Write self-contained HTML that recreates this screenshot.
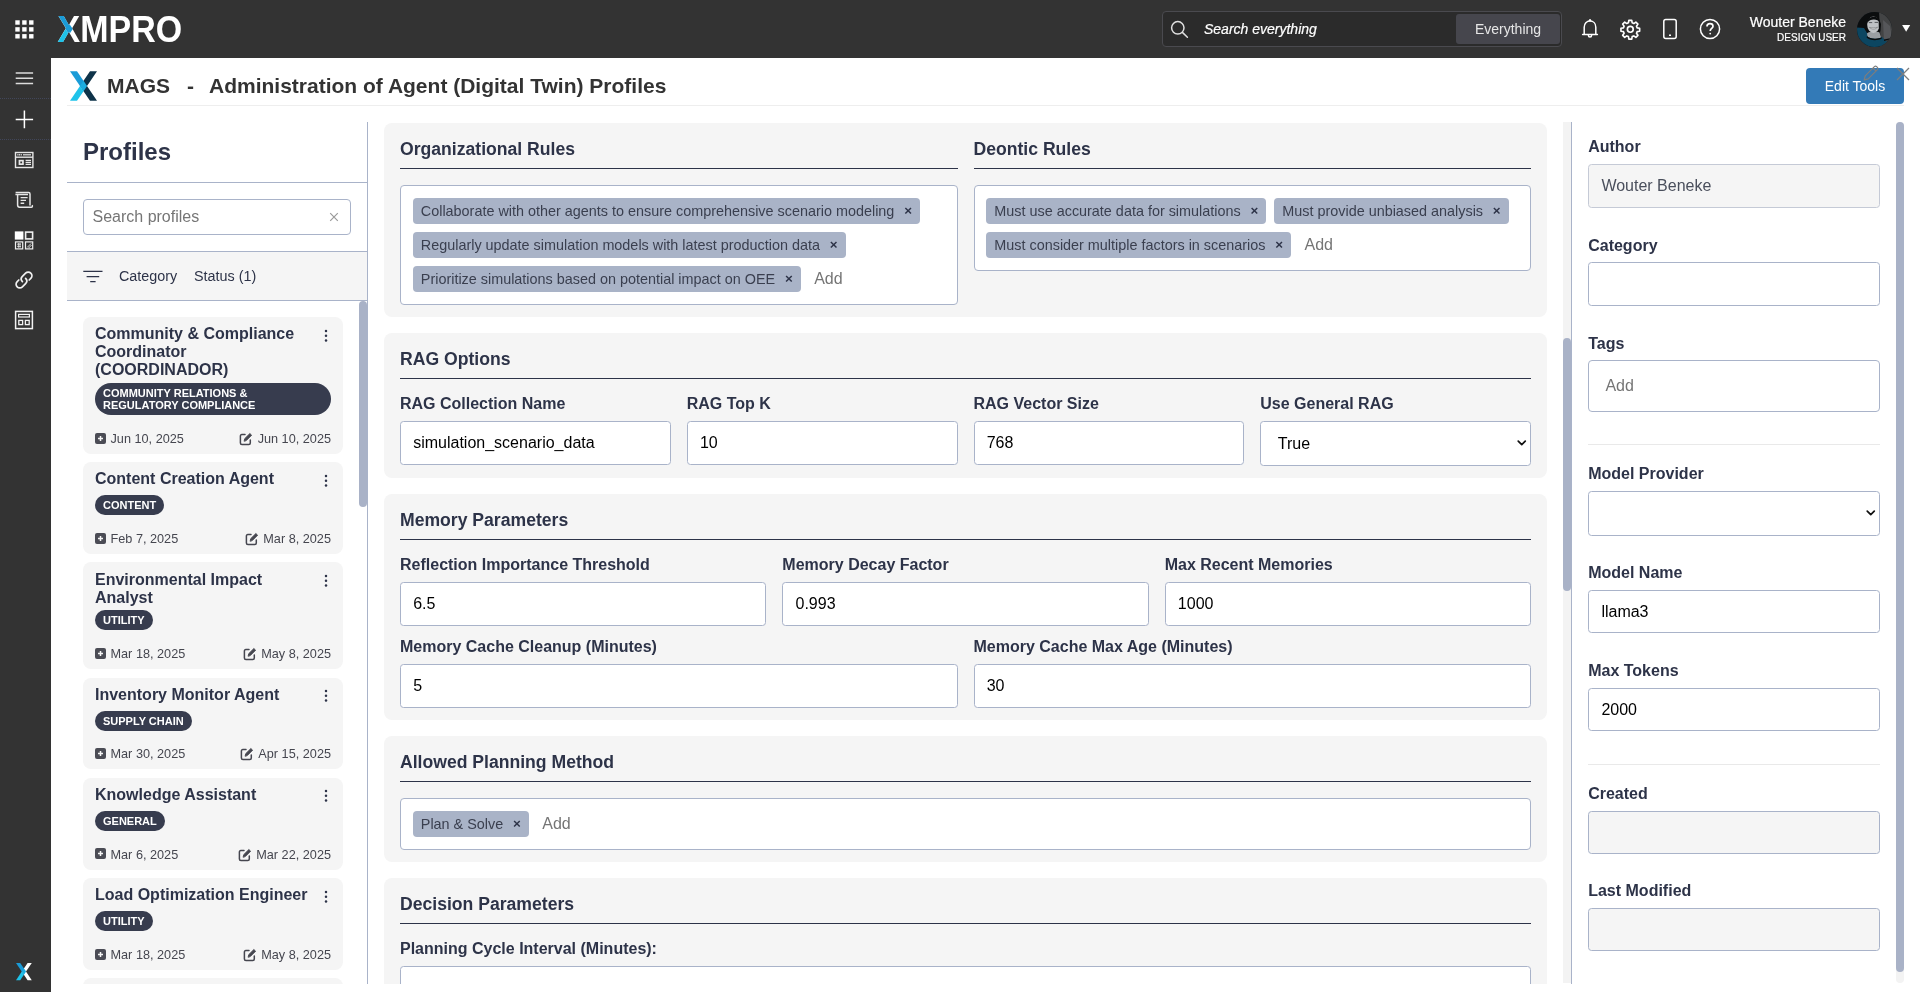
<!DOCTYPE html>
<html lang="en">
<head>
<meta charset="utf-8">
<title>MAGS - Administration of Agent (Digital Twin) Profiles</title>
<style>
*{box-sizing:border-box;}
html,body{margin:0;padding:0;}
body{width:1920px;height:992px;overflow:hidden;background:#fff;font-family:"Liberation Sans",Arial,Helvetica,sans-serif;color:#2d3348;position:relative;will-change:transform;}
.abs{position:absolute;}
/* ---------- top bar ---------- */
.topbar{position:absolute;left:0;top:0;width:1920px;height:58px;background:#333;color:#fff;}
.sidebar{position:absolute;left:0;top:58px;width:51px;height:934px;background:#333;}
.sidebar .sep{position:absolute;left:0;width:51px;height:0;border-top:1px dotted #41465a;}
.sidebar svg,.topbar svg{position:absolute;overflow:visible;}
.search{position:absolute;left:1162px;top:11px;width:400px;height:36px;border:1px solid #4a4a4f;border-radius:4px;background:#2b2b2b;}
.search .ph{position:absolute;left:41px;top:0;line-height:34px;font-size:14px;font-style:italic;color:#fff;}
.search .ev{position:absolute;left:293px;top:2px;width:104px;height:30px;background:#46464d;border-radius:3px;text-align:center;line-height:30px;font-size:14px;color:#e6e6e6;}
.uname,.urole,.search .ph{-webkit-text-stroke:0.2px #fff;}
.uname{position:absolute;right:74px;top:14px;font-size:14px;line-height:16px;color:#fff;text-align:right;white-space:nowrap;}
.urole{position:absolute;right:74px;top:32px;font-size:10px;line-height:12px;color:#fff;text-align:right;white-space:nowrap;}
.avatar{position:absolute;left:1857px;top:12.3px;width:35.2px;height:35.2px;border-radius:50%;overflow:hidden;background:#1f2a33;}
/* ---------- title row ---------- */
.titlerow{position:absolute;left:67px;top:58px;width:1837px;height:48px;border-bottom:1px solid #eeeeee;}
.titlerow h1{position:absolute;left:40px;top:13px;margin:0;font-size:21px;line-height:30px;font-weight:bold;color:#333;white-space:pre;}
.editbtn{position:absolute;left:1806px;top:68px;width:98px;height:36px;background:#337ab7;border-radius:4px;color:#fff;font-size:14px;line-height:36px;text-align:center;}
/* ---------- left panel ---------- */
.left{position:absolute;left:67px;top:122px;width:301px;height:861.6px;border-right:1px solid #a9b3c9;overflow:hidden;}
.mid{position:absolute;left:368px;top:122px;width:1203px;height:861.6px;overflow:hidden;}
.right{position:absolute;left:1571px;top:122px;width:349px;height:861.6px;border-left:1px solid #a9b3c9;overflow:hidden;}

/* left panel content */
.left h2{position:absolute;left:16px;top:12px;margin:0;font-size:24px;line-height:36px;font-weight:bold;color:#2d3348;}
.left .hr1{position:absolute;left:0;top:60px;width:300px;height:1px;background:#a9b3c9;}
.left .sinput{position:absolute;left:16px;top:77px;width:268px;height:36px;border:1px solid #a9b3c9;border-radius:4px;background:#fff;}
.left .sinput span{position:absolute;left:8.5px;top:0;line-height:34px;font-size:16px;color:#757575;}
.left .sinput svg{position:absolute;left:245px;top:12px;}
.left .fbar{position:absolute;left:0;top:129px;width:300px;height:50px;background:#f5f5f5;border-top:1px solid #a9b3c9;border-bottom:1px solid #a9b3c9;font-size:14.35px;color:#2d3348;}
.left .fbar span{position:absolute;top:0;line-height:49px;white-space:nowrap;}
.cards{position:absolute;left:16px;top:195.1px;width:260px;}
.card{position:relative;background:#f5f5f5;border-radius:8px;padding:8.3px 12px 7.3px 12px;margin-bottom:8.3px;}
.card .t{min-height:21.2px;margin:0 0 3.7px 0;font-size:16px;line-height:18px;font-weight:bold;color:#2d3348;padding-right:20px;}
.card .b{display:inline-block;vertical-align:top;background:#373c4e;color:#fff;font-size:11px;line-height:12px;font-weight:bold;padding:4px 8px;border-radius:16px;text-transform:uppercase;}
.card .brow{display:block;font-size:0;line-height:0;}
.card .d{position:relative;margin-top:15.5px;height:16px;font-size:12.7px;line-height:16px;color:#45464f;}
.card .d .c{position:absolute;left:15.5px;top:0.3px;white-space:nowrap;}
.card .d .m{position:absolute;right:0;top:0.3px;white-space:nowrap;}
.card .d svg{position:absolute;top:2px;}
.card .dots{position:absolute;right:15.4px;top:11.6px;width:4px;height:14px;}

/* middle panel */
.sec{position:absolute;left:16px;width:1163px;background:#f5f5f5;border-radius:8px;}
.sec h3{position:absolute;margin:0;font-size:17.6px;line-height:22px;font-weight:bold;color:#2d3348;white-space:nowrap;}
.sec .rule{position:absolute;height:1px;background:#2d3348;}
.lbl{position:absolute;margin:0;font-size:16px;line-height:20px;font-weight:bold;color:#2d3348;white-space:nowrap;}
.inp{position:absolute;height:43.5px;border:1px solid #a9b3c9;border-radius:3.5px;background:#fff;font-size:16px;line-height:41.5px;color:#000;padding-left:12.2px;white-space:nowrap;overflow:hidden;}
.inp.dis{background:#f5f5f5;border-color:#c5cad6;color:#4a4f5c;}
.inp.dis2{background:#f5f5f5;}
.inp svg{position:absolute;right:3.2px;top:17.9px;}
.tbox{position:absolute;border:1px solid #a9b3c9;border-radius:4px;background:#fff;padding:7.8px;font-size:0;}
.chip{display:inline-block;vertical-align:top;margin:4px;padding:4px 8px;height:26px;border-radius:4px;background:#a9b3c7;color:#3a3f4f;font-size:14.4px;line-height:18px;white-space:nowrap;}
.chip b{margin-left:9.8px;font-weight:bold;font-size:13.4px;position:relative;top:-0.8px;color:#2d3348;}
.add{display:inline-block;vertical-align:top;margin:4px;padding:4px 8px 4px 5.4px;height:26px;font-size:16px;line-height:17px;color:#757575;}
.hr{position:absolute;height:1px;background:#e9e9e9;}
.sbar{position:absolute;background:#a9b2c7;border-radius:4px;}
</style>
</head>
<body>

<!-- TOPBAR -->
<div class="topbar" id="topbar">
  <!-- app grid -->
  <svg style="left:14.5px;top:19.5px" width="19" height="19" viewBox="0 0 19 19" fill="#fff">
    <rect x="0.3" y="0.3" width="4.4" height="4.4"/><rect x="7.2" y="0.3" width="4.4" height="4.4"/><rect x="14.1" y="0.3" width="4.4" height="4.4"/>
    <rect x="0.3" y="7.2" width="4.4" height="4.4"/><rect x="7.2" y="7.2" width="4.4" height="4.4"/><rect x="14.1" y="7.2" width="4.4" height="4.4"/>
    <rect x="0.3" y="14.1" width="4.4" height="4.4"/><rect x="7.2" y="14.1" width="4.4" height="4.4"/><rect x="14.1" y="14.1" width="4.4" height="4.4"/>
  </svg>
  <!-- XMPRO logo -->
  <svg style="left:50px;top:8px" width="140" height="42" viewBox="0 0 140 42">
    <defs>
      <clipPath id="cxr"><polygon points="19.5,0 40,0 40,42 19.5,42 23.5,21"/></clipPath>
      <clipPath id="cxu"><polygon points="0,0 19.1,0 19.1,15.6 22.8,21.1 19.1,26.6 15.4,21.1 0,21.1"/></clipPath>
      <clipPath id="cxl"><polygon points="0,42 0,21.1 15.4,21.1 19.1,26.6 19.1,42"/></clipPath>
    </defs>
    <g font-family="Liberation Sans, Arial, sans-serif" font-weight="bold" font-size="36.3">
      <text x="7.6" y="33.6" fill="#ffffff" textLength="124.5" lengthAdjust="spacingAndGlyphs">XMPRO</text>
      <text x="7.6" y="33.6" fill="#1fc3ea" clip-path="url(#cxl)" textLength="23" lengthAdjust="spacingAndGlyphs">X</text>
      <text x="7.6" y="33.6" fill="#1a9cd8" clip-path="url(#cxu)" textLength="23" lengthAdjust="spacingAndGlyphs">X</text>
    </g>
  </svg>
  <!-- search -->
  <div class="search">
    <svg style="left:7.4px;top:8.3px" width="22" height="22" viewBox="0 0 22 22" fill="none" stroke="#e0e0e0" stroke-width="1.5" stroke-linecap="round"><circle cx="7.8" cy="7.8" r="6.2"/><path d="M12.4 12.4 L17.4 17.2"/></svg>
    <div class="ph">Search everything</div>
    <div class="ev">Everything</div>
  </div>
  <!-- bell -->
  <svg style="left:1580px;top:18px" width="20" height="22" viewBox="0 0 20 22" fill="none" stroke="#fff" stroke-width="1.5" stroke-linejoin="round" stroke-linecap="round">
    <path d="M4.2 16.3 V9.2 C4.2 5.4 6.7 3 10 3 C13.3 3 15.8 5.4 15.8 9.2 V16.3"/><path d="M2.6 16.4 H17.4"/><path d="M8.4 17.2 C8.4 19.6 11.6 19.6 11.6 17.2"/><path d="M9.3 2.6 L10 1.7 L10.7 2.6"/>
  </svg>
  <!-- gear -->
  <svg style="left:1619.7px;top:18.7px" width="20.6" height="20.6" viewBox="0 0 24 24" fill="none" stroke="#fff" stroke-width="1.9" stroke-linejoin="round">
    <circle cx="12" cy="12" r="3.4"/>
    <path d="M10.3 1.6h3.4l.5 2.9 1.9.8 2.4-1.7 2.4 2.4-1.7 2.4.8 1.9 2.9.5v3.4l-2.9.5-.8 1.9 1.7 2.4-2.4 2.4-2.4-1.7-1.9.8-.5 2.9h-3.4l-.5-2.9-1.9-.8-2.4 1.7-2.4-2.4 1.7-2.4-.8-1.9-2.9-.5v-3.4l2.9-.5.8-1.9-1.7-2.4 2.4-2.4 2.4 1.7 1.9-.8z"/>
  </svg>
  <!-- phone -->
  <svg style="left:1662px;top:18px" width="16" height="22" viewBox="0 0 16 22" fill="none" stroke="#fff" stroke-width="1.5">
    <rect x="1.8" y="1.4" width="12.4" height="19.2" rx="2"/><path d="M7 17.2h2" stroke-width="1.4"/>
  </svg>
  <!-- help -->
  <svg style="left:1699px;top:18px" width="22" height="22" viewBox="0 0 22 22" fill="none" stroke="#fff" stroke-width="1.5">
    <circle cx="11" cy="11" r="9.6"/>
    <path d="M8 8.6 C8 6.6 9.4 5.7 11 5.7 C12.7 5.7 14 6.7 14 8.3 C14 10.4 11.2 10.5 11.2 12.9" stroke-width="1.7"/><circle cx="11.2" cy="15.6" r="0.9" fill="#fff" stroke="none"/>
  </svg>
  <div class="uname">Wouter Beneke</div>
  <div class="urole">DESIGN USER</div>
  <div class="avatar">
    <svg style="left:0;top:0" width="35" height="35" viewBox="0 0 35 35">
      <rect width="35" height="35" fill="#0b0d0e"/>
      <path d="M22 0 H35 V35 H24 Z" fill="#434445"/>
      <path d="M26 8 L33 14 L35 26 L27 30 Z" fill="#56575a"/>
      <path d="M0 15.5 L7 16 L10 21 L17 25.5 L25 25 L29 29 L35 33 V35 H0 Z" fill="#0c4661"/>
      <path d="M10 21.5 C12 19 20 19 22.5 20.5 L24 25.5 C20 27.5 14 27 10.5 24.5 Z" fill="#9b9fa3"/>
      <path d="M10 24 C13 27 20 27.5 24.5 25.2 L24.8 26.6 C20 29 13 28.6 9.6 25.4 Z" fill="#0b0d0e"/>
      <ellipse cx="16.4" cy="12.8" rx="6.2" ry="8.2" fill="#bfc2c5"/>
      <path d="M10.2 11 C9.6 3.4 22.4 2.4 22.6 10.4 C20.6 6.4 12.6 6.6 10.2 11z" fill="#0b0d0e"/>
      <path d="M11.8 10.6 h3.4 M17.6 10.4 h3.4" stroke="#55585b" stroke-width="1"/>
      <path d="M12.4 15.4 C14.4 17.6 18.8 17.6 20.6 15.2 C18.6 16 14.4 16.2 12.4 15.4z" fill="#f4f4f4" stroke="#6b6e70" stroke-width="0.6"/>
      <path d="M21.6 6 L24 12 L23.4 20 L21.8 16 Z" fill="#0b0d0e"/>
      <path d="M27 27.4 L33 26.2 V27.8 L27 29 Z" fill="#0b0d0e"/>
    </svg>
  </div>
  <svg style="left:1901px;top:25px" width="10" height="8" viewBox="0 0 10 8"><path d="M1.1 0.1h8.1L5.15 6.7z" fill="#fff"/></svg>
</div>

<!-- SIDEBAR -->
<div class="sidebar" id="sidebar">
  <!-- hamburger -->
  <svg style="left:15px;top:12px" width="19" height="16" viewBox="0 0 19 16" stroke="#dcdcdc" stroke-width="1.5"><path d="M0.7 2.9h17.4M0.7 8.2h17.4M0.7 13.5h17.4"/></svg>
  <div class="sep" style="top:40px"></div>
  <!-- plus -->
  <svg style="left:15px;top:52px" width="19" height="19" viewBox="0 0 19 19" stroke="#fff" stroke-width="1.5"><path d="M0.7 9.4h17.4M9.4 0.6v17.6"/></svg>
  <div class="sep" style="top:81px"></div>
  <!-- app pages -->
  <svg style="left:14px;top:93px" width="20" height="18" viewBox="0 0 20 18" fill="none" stroke="#e6e6e6" stroke-width="1.4">
    <rect x="1.5" y="1.5" width="17.4" height="15"/><path d="M1.5 6.2h17.4"/><path d="M3.4 3.8h4.4" stroke-width="1.6" stroke-dasharray="1.1 0.6"/><path d="M9 3.8h8" stroke-width="1.2"/>
    <rect x="4.6" y="8.8" width="5.2" height="5.2" fill="#e6e6e6" stroke="none"/><rect x="6.3" y="10.5" width="1.8" height="1.8" fill="#333" stroke="none"/>
    <path d="M11.6 9.4h5.4M11.6 11.4h5.4M11.6 13.4h5.4" stroke-width="1.2"/>
  </svg>
  <!-- recommendations scroll -->
  <svg style="left:14px;top:133px" width="20" height="18" viewBox="0 0 20 18" fill="none" stroke="#e6e6e6" stroke-width="1.5" stroke-linejoin="round">
    <path d="M3.6 3.4 V14 C3.6 15.6 4.4 16.2 5.6 16.2 H17.4 C18.4 16.2 18.6 15 18.2 14.2"/><path d="M1.6 1.6 H14.6 C15.6 1.6 16 2.2 16 3 V14.4"/><path d="M1.4 3.5 H14" />
    <path d="M6.6 6.6h7M6.6 9.4h5.4M6.6 12.2h3.6" stroke-width="1.4"/>
  </svg>
  <!-- app designer blocks -->
  <svg style="left:14px;top:173px" width="20" height="19" viewBox="0 0 20 19" fill="none" stroke="#efefef" stroke-width="1.4">
    <rect x="0.8" y="0.4" width="8.6" height="8.2" fill="#fff" stroke="none"/>
    <rect x="11.6" y="1.1" width="7" height="6.8" stroke-width="1.6"/>
    <rect x="1.5" y="10.9" width="7.2" height="7" stroke-width="1.2"/><path d="M3.2 13.2h3.8M3.2 15.4h3.8M4.4 12v4.8M6 12v4.8" stroke-width="0.8"/>
    <rect x="11.5" y="10.9" width="7.2" height="7" stroke-width="1.2"/><path d="M13.2 16.4l4-4M14.6 17l3-3" stroke-width="0.9"/>
  </svg>
  <!-- link -->
  <svg style="left:14px;top:212px" width="20" height="20" viewBox="0 0 20 20" fill="none" stroke="#f2f2f2" stroke-width="1.7" stroke-linecap="round">
    <path d="M8.4 11.6 C6.9 10.1 6.9 7.9 8.4 6.4 L11.6 3.2 C13.1 1.7 15.4 1.7 16.8 3.2 C18.3 4.7 18.3 6.9 16.8 8.4 L15.2 10"/>
    <path d="M11.6 8.4 C13.1 9.9 13.1 12.1 11.6 13.6 L8.4 16.8 C6.9 18.3 4.6 18.3 3.2 16.8 C1.7 15.3 1.7 13.1 3.2 11.6 L4.8 10"/>
  </svg>
  <!-- widget -->
  <svg style="left:14px;top:252px" width="20" height="20" viewBox="0 0 20 20" fill="none" stroke="#f2f2f2" stroke-width="1.5">
    <rect x="1.6" y="1.4" width="16.8" height="17.2"/><rect x="4.6" y="4.4" width="10.8" height="2.6" stroke-width="1.2"/>
    <rect x="4.8" y="10.4" width="3.8" height="4.2" stroke-width="1.3"/><rect x="11.4" y="10.4" width="3.8" height="4.2" stroke-width="1.3"/>
  </svg>
  <!-- x mark -->
  <svg style="left:16px;top:905px" width="15.8" height="17.2" viewBox="0 0 15.8 17.2">
    <polygon points="11.60,0.00 15.80,0.00 10.00,8.60 15.80,17.20 11.60,17.20 7.90,11.71 5.80,8.60 7.90,5.49" fill="#ffffff"/>
    <polygon points="0.00,0.00 4.20,0.00 10.00,8.60 7.90,11.71" fill="#1a9bd7"/>
    <polygon points="0.00,17.20 4.20,17.20 7.90,11.71 5.80,8.60" fill="#1fc3ea"/>
    <polygon points="5.80,8.60 7.90,5.49 10.00,8.60 7.90,11.71" fill="#1fc3ea" fill-opacity="0.45"/>
  </svg>
</div>

<!-- TITLE -->
<div class="titlerow" id="titlerow">
  <svg class="xlogo" style="position:absolute;left:2.6px;top:13px" width="27" height="30" viewBox="0 0 27 29.6">
    <polygon points="20.00,0.00 27.00,0.00 17.00,14.80 27.00,29.60 20.00,29.60 13.50,19.98 10.00,14.80 13.50,9.62" fill="#0e3349"/>
    <polygon points="0.00,0.00 7.00,0.00 17.00,14.80 13.50,19.98" fill="#1a9bd7"/>
    <polygon points="0.00,29.60 7.00,29.60 13.50,19.98 10.00,14.80" fill="#1fc3ea"/>
    <polygon points="10.00,14.80 13.50,9.62 17.00,14.80 13.50,19.98" fill="#1fc3ea" fill-opacity="0.45"/>
  </svg>
  <h1><span style="position:absolute;left:0">MAGS</span><span style="position:absolute;left:80px">-</span><span style="position:absolute;left:102px">Administration of Agent (Digital Twin) Profiles</span></h1>
</div>
<div class="editbtn">Edit Tools</div>
<svg style="position:absolute;left:1862px;top:64px" width="18" height="18" viewBox="0 0 18 18" fill="none" stroke="#7d7d7d" stroke-width="1.2" stroke-linejoin="round"><path d="M2.2 15.8 L3.2 11.8 L12.4 2.6 C13 2 14 2 14.6 2.6 L15.4 3.4 C16 4 16 5 15.4 5.6 L6.2 14.8 Z"/><path d="M11 4 L14 7"/></svg>
<svg style="position:absolute;left:1895px;top:66px" width="16" height="16" viewBox="0 0 16 16" stroke="#7d7d7d" stroke-width="1.3"><path d="M2 2 L14 14 M14 2 L2 14"/></svg>

<!-- LEFT PANEL -->
<div class="left" id="left">
  <h2>Profiles</h2>
  <div class="hr1"></div>
  <div class="sinput"><span>Search profiles</span><svg width="10" height="10" viewBox="0 0 10 10" stroke="#9a9a9a" stroke-width="1.2"><path d="M1.2 1.2 L8.8 8.8 M8.8 1.2 L1.2 8.8"/></svg></div>
  <div class="fbar">
    <svg style="position:absolute;left:16px;top:18px" width="20" height="13" viewBox="0 0 20 13" stroke="#2d3348" stroke-width="1.3"><path d="M0.3 1.4h19.2M3.6 6.6h12.6M7.2 11.6h5.4"/></svg>
    <span style="left:52px">Category</span><span style="left:127px">Status (1)</span>
  </div>
  <div class="cards">
    <div class="card">
      <div class="t">Community &amp; Compliance Coordinator (COORDINADOR)</div>
      <span class="brow"><span class="b">Community Relations &amp; Regulatory Compliance</span></span>
      <div class="d">
        <svg style="left:0" width="11" height="11" viewBox="0 0 11 11"><rect width="11" height="11" rx="2" fill="#4b4c55"/><path d="M3 5.5h5M5.5 3v5" stroke="#f5f5f5" stroke-width="1.5"/></svg>
        <span class="c">Jun 10, 2025</span>
        <span class="m"><svg style="left:-18.5px;top:1px" width="14" height="14" viewBox="0 0 14 14" fill="none" stroke="#45464f" stroke-width="1.5" stroke-linejoin="round" stroke-linecap="round"><path d="M6 2.6H2.9C1.9 2.6 1.4 3.2 1.4 4.1V11C1.4 12 2 12.5 2.9 12.5H9.8C10.8 12.5 11.3 11.9 11.3 11V8"/><path d="M5.2 8.9 L5.7 6.7 L10.9 1.5 L12.6 3.2 L7.4 8.4 Z" fill="#45464f" stroke-width="0.9"/></svg>Jun 10, 2025</span>
      </div>
      <svg class="dots" viewBox="0 0 4 14"><circle cx="2" cy="2" r="1.25" fill="#2d3348"/><circle cx="2" cy="6.8" r="1.25" fill="#2d3348"/><circle cx="2" cy="11.6" r="1.25" fill="#2d3348"/></svg>
    </div>
    <div class="card">
      <div class="t">Content Creation Agent</div>
      <span class="brow"><span class="b">Content</span></span>
      <div class="d">
        <svg style="left:0" width="11" height="11" viewBox="0 0 11 11"><rect width="11" height="11" rx="2" fill="#4b4c55"/><path d="M3 5.5h5M5.5 3v5" stroke="#f5f5f5" stroke-width="1.5"/></svg>
        <span class="c">Feb 7, 2025</span>
        <span class="m"><svg style="left:-18.5px;top:1px" width="14" height="14" viewBox="0 0 14 14" fill="none" stroke="#45464f" stroke-width="1.5" stroke-linejoin="round" stroke-linecap="round"><path d="M6 2.6H2.9C1.9 2.6 1.4 3.2 1.4 4.1V11C1.4 12 2 12.5 2.9 12.5H9.8C10.8 12.5 11.3 11.9 11.3 11V8"/><path d="M5.2 8.9 L5.7 6.7 L10.9 1.5 L12.6 3.2 L7.4 8.4 Z" fill="#45464f" stroke-width="0.9"/></svg>Mar 8, 2025</span>
      </div>
      <svg class="dots" viewBox="0 0 4 14"><circle cx="2" cy="2" r="1.25" fill="#2d3348"/><circle cx="2" cy="6.8" r="1.25" fill="#2d3348"/><circle cx="2" cy="11.6" r="1.25" fill="#2d3348"/></svg>
    </div>
    <div class="card">
      <div class="t">Environmental Impact Analyst</div>
      <span class="brow"><span class="b">Utility</span></span>
      <div class="d">
        <svg style="left:0" width="11" height="11" viewBox="0 0 11 11"><rect width="11" height="11" rx="2" fill="#4b4c55"/><path d="M3 5.5h5M5.5 3v5" stroke="#f5f5f5" stroke-width="1.5"/></svg>
        <span class="c">Mar 18, 2025</span>
        <span class="m"><svg style="left:-18.5px;top:1px" width="14" height="14" viewBox="0 0 14 14" fill="none" stroke="#45464f" stroke-width="1.5" stroke-linejoin="round" stroke-linecap="round"><path d="M6 2.6H2.9C1.9 2.6 1.4 3.2 1.4 4.1V11C1.4 12 2 12.5 2.9 12.5H9.8C10.8 12.5 11.3 11.9 11.3 11V8"/><path d="M5.2 8.9 L5.7 6.7 L10.9 1.5 L12.6 3.2 L7.4 8.4 Z" fill="#45464f" stroke-width="0.9"/></svg>May 8, 2025</span>
      </div>
      <svg class="dots" viewBox="0 0 4 14"><circle cx="2" cy="2" r="1.25" fill="#2d3348"/><circle cx="2" cy="6.8" r="1.25" fill="#2d3348"/><circle cx="2" cy="11.6" r="1.25" fill="#2d3348"/></svg>
    </div>
    <div class="card">
      <div class="t">Inventory Monitor Agent</div>
      <span class="brow"><span class="b">Supply Chain</span></span>
      <div class="d">
        <svg style="left:0" width="11" height="11" viewBox="0 0 11 11"><rect width="11" height="11" rx="2" fill="#4b4c55"/><path d="M3 5.5h5M5.5 3v5" stroke="#f5f5f5" stroke-width="1.5"/></svg>
        <span class="c">Mar 30, 2025</span>
        <span class="m"><svg style="left:-18.5px;top:1px" width="14" height="14" viewBox="0 0 14 14" fill="none" stroke="#45464f" stroke-width="1.5" stroke-linejoin="round" stroke-linecap="round"><path d="M6 2.6H2.9C1.9 2.6 1.4 3.2 1.4 4.1V11C1.4 12 2 12.5 2.9 12.5H9.8C10.8 12.5 11.3 11.9 11.3 11V8"/><path d="M5.2 8.9 L5.7 6.7 L10.9 1.5 L12.6 3.2 L7.4 8.4 Z" fill="#45464f" stroke-width="0.9"/></svg>Apr 15, 2025</span>
      </div>
      <svg class="dots" viewBox="0 0 4 14"><circle cx="2" cy="2" r="1.25" fill="#2d3348"/><circle cx="2" cy="6.8" r="1.25" fill="#2d3348"/><circle cx="2" cy="11.6" r="1.25" fill="#2d3348"/></svg>
    </div>
    <div class="card">
      <div class="t">Knowledge Assistant</div>
      <span class="brow"><span class="b">General</span></span>
      <div class="d">
        <svg style="left:0" width="11" height="11" viewBox="0 0 11 11"><rect width="11" height="11" rx="2" fill="#4b4c55"/><path d="M3 5.5h5M5.5 3v5" stroke="#f5f5f5" stroke-width="1.5"/></svg>
        <span class="c">Mar 6, 2025</span>
        <span class="m"><svg style="left:-18.5px;top:1px" width="14" height="14" viewBox="0 0 14 14" fill="none" stroke="#45464f" stroke-width="1.5" stroke-linejoin="round" stroke-linecap="round"><path d="M6 2.6H2.9C1.9 2.6 1.4 3.2 1.4 4.1V11C1.4 12 2 12.5 2.9 12.5H9.8C10.8 12.5 11.3 11.9 11.3 11V8"/><path d="M5.2 8.9 L5.7 6.7 L10.9 1.5 L12.6 3.2 L7.4 8.4 Z" fill="#45464f" stroke-width="0.9"/></svg>Mar 22, 2025</span>
      </div>
      <svg class="dots" viewBox="0 0 4 14"><circle cx="2" cy="2" r="1.25" fill="#2d3348"/><circle cx="2" cy="6.8" r="1.25" fill="#2d3348"/><circle cx="2" cy="11.6" r="1.25" fill="#2d3348"/></svg>
    </div>
    <div class="card">
      <div class="t">Load Optimization Engineer</div>
      <span class="brow"><span class="b">Utility</span></span>
      <div class="d">
        <svg style="left:0" width="11" height="11" viewBox="0 0 11 11"><rect width="11" height="11" rx="2" fill="#4b4c55"/><path d="M3 5.5h5M5.5 3v5" stroke="#f5f5f5" stroke-width="1.5"/></svg>
        <span class="c">Mar 18, 2025</span>
        <span class="m"><svg style="left:-18.5px;top:1px" width="14" height="14" viewBox="0 0 14 14" fill="none" stroke="#45464f" stroke-width="1.5" stroke-linejoin="round" stroke-linecap="round"><path d="M6 2.6H2.9C1.9 2.6 1.4 3.2 1.4 4.1V11C1.4 12 2 12.5 2.9 12.5H9.8C10.8 12.5 11.3 11.9 11.3 11V8"/><path d="M5.2 8.9 L5.7 6.7 L10.9 1.5 L12.6 3.2 L7.4 8.4 Z" fill="#45464f" stroke-width="0.9"/></svg>May 8, 2025</span>
      </div>
      <svg class="dots" viewBox="0 0 4 14"><circle cx="2" cy="2" r="1.25" fill="#2d3348"/><circle cx="2" cy="6.8" r="1.25" fill="#2d3348"/><circle cx="2" cy="11.6" r="1.25" fill="#2d3348"/></svg>
    </div>
    <div class="card">
      <div class="t">Maintenance Planner</div>
      <span class="brow"><span class="b">Maintenance</span></span>
      <div class="d">
        <svg style="left:0" width="11" height="11" viewBox="0 0 11 11"><rect width="11" height="11" rx="2" fill="#4b4c55"/><path d="M3 5.5h5M5.5 3v5" stroke="#f5f5f5" stroke-width="1.5"/></svg>
        <span class="c">Mar 18, 2025</span>
        <span class="m"><svg style="left:-18.5px;top:1px" width="14" height="14" viewBox="0 0 14 14" fill="none" stroke="#45464f" stroke-width="1.5" stroke-linejoin="round" stroke-linecap="round"><path d="M6 2.6H2.9C1.9 2.6 1.4 3.2 1.4 4.1V11C1.4 12 2 12.5 2.9 12.5H9.8C10.8 12.5 11.3 11.9 11.3 11V8"/><path d="M5.2 8.9 L5.7 6.7 L10.9 1.5 L12.6 3.2 L7.4 8.4 Z" fill="#45464f" stroke-width="0.9"/></svg>May 8, 2025</span>
      </div>
      <svg class="dots" viewBox="0 0 4 14"><circle cx="2" cy="2" r="1.25" fill="#2d3348"/><circle cx="2" cy="6.8" r="1.25" fill="#2d3348"/><circle cx="2" cy="11.6" r="1.25" fill="#2d3348"/></svg>
    </div>
  </div>
  <div class="sbar" style="left:292px;top:179px;width:8px;height:206px"></div>
</div>

<!-- MIDDLE PANEL -->
<div class="mid" id="mid">
  <div class="sec" style="top:1px;height:193.6px">
    <h3 style="left:16px;top:15px">Organizational Rules</h3><div class="rule" style="left:16px;top:45px;width:557.5px"></div>
    <h3 style="left:589.5px;top:15px">Deontic Rules</h3><div class="rule" style="left:589.5px;top:45px;width:557.5px"></div>
    <div class="tbox" style="left:16px;top:62.2px;width:557.5px"><span class="chip">Collaborate with other agents to ensure comprehensive scenario modeling<b>×</b></span><br><span class="chip">Regularly update simulation models with latest production data<b>×</b></span><br><span class="chip">Prioritize simulations based on potential impact on OEE<b>×</b></span><span class="add">Add</span></div>
    <div class="tbox" style="left:589.5px;top:62.2px;width:557.5px"><span class="chip">Must use accurate data for simulations<b>×</b></span><span class="chip">Must provide unbiased analysis<b>×</b></span><br><span class="chip">Must consider multiple factors in scenarios<b>×</b></span><span class="add">Add</span></div>
  </div>
  <div class="sec" style="top:211px;height:144.9px">
    <h3 style="left:16px;top:15px">RAG Options</h3><div class="rule" style="left:16px;top:45px;width:1131px"></div>
    <div class="lbl" style="left:16.00px;top:61px">RAG Collection Name</div><div class="inp" style="left:16.00px;top:88.3px;width:270.75px">simulation_scenario_data</div>
    <div class="lbl" style="left:302.75px;top:61px">RAG Top K</div><div class="inp" style="left:302.75px;top:88.3px;width:270.75px">10</div>
    <div class="lbl" style="left:589.50px;top:61px">RAG Vector Size</div><div class="inp" style="left:589.50px;top:88.3px;width:270.75px">768</div>
    <div class="lbl" style="left:876.25px;top:61px">Use General RAG</div><div class="inp" style="left:876.25px;top:88.3px;width:270.75px;padding-left:16.5px;height:44.4px;line-height:44.4px">True<svg width="9.5" height="6" viewBox="0 0 11 7" fill="none" stroke="#111" stroke-width="2" stroke-linecap="round" stroke-linejoin="round"><path d="M1.4 1.3 L5.5 5.4 L9.6 1.3"/></svg></div>
  </div>
  <div class="sec" style="top:372px;height:225.8px">
    <h3 style="left:16px;top:15px">Memory Parameters</h3><div class="rule" style="left:16px;top:45px;width:1131px"></div>
    <div class="lbl" style="left:16.00px;top:61px">Reflection Importance Threshold</div><div class="inp" style="left:16.00px;top:88.3px;width:366.33px">6.5</div>
    <div class="lbl" style="left:398.33px;top:61px">Memory Decay Factor</div><div class="inp" style="left:398.33px;top:88.3px;width:366.33px">0.993</div>
    <div class="lbl" style="left:780.67px;top:61px">Max Recent Memories</div><div class="inp" style="left:780.67px;top:88.3px;width:366.33px">1000</div>
    <div class="lbl" style="left:16.00px;top:143px">Memory Cache Cleanup (Minutes)</div><div class="inp" style="left:16.00px;top:170.3px;width:557.50px">5</div>
    <div class="lbl" style="left:589.50px;top:143px">Memory Cache Max Age (Minutes)</div><div class="inp" style="left:589.50px;top:170.3px;width:557.50px">30</div>
  </div>
  <div class="sec" style="top:614px;height:126px">
    <h3 style="left:16px;top:15px">Allowed Planning Method</h3><div class="rule" style="left:16px;top:45px;width:1131px"></div>
    <div class="tbox" style="left:16px;top:62.2px;width:1131px"><span class="chip">Plan &amp; Solve<b>×</b></span><span class="add">Add</span></div>
  </div>
  <div class="sec" style="top:756px;height:400px">
    <h3 style="left:16px;top:15px">Decision Parameters</h3><div class="rule" style="left:16px;top:45px;width:1131px"></div>
    <div class="lbl" style="left:16px;top:61px">Planning Cycle Interval (Minutes):</div><div class="inp" style="left:16px;top:88.3px;width:1131px"></div>
  </div>
  <div class="abs" style="left:1195px;top:0;width:8px;height:861px;background:#f3f3f3"></div>
  <div class="sbar" style="left:1195px;top:216px;width:8px;height:253px"></div>
</div>

<!-- RIGHT PANEL -->
<div class="right" id="right">
  <div class="lbl" style="left:16.2px;top:14.5px">Author</div>
  <div class="inp dis" style="left:16.2px;top:42.1px;width:291.8px;height:43.6px;line-height:41.6px">Wouter Beneke</div>
  <div class="lbl" style="left:16.2px;top:113.5px">Category</div>
  <div class="inp " style="left:16.2px;top:140.1px;width:291.8px;height:43.5px;line-height:41.5px"></div>
  <div class="lbl" style="left:16.2px;top:211.8px">Tags</div>
  <div class="tbox" style="left:16.2px;top:238.3px;width:291.8px;height:51.5px"><span class="add" style="margin-top:3.6px;margin-left:3px">Add</span></div>
  <div class="lbl" style="left:16.2px;top:342.4px">Model Provider</div>
  <div class="inp" style="left:16.2px;top:369.3px;width:291.8px;height:44.5px"><svg width="9.5" height="6" viewBox="0 0 11 7" fill="none" stroke="#111" stroke-width="2" stroke-linecap="round" stroke-linejoin="round"><path d="M1.4 1.3 L5.5 5.4 L9.6 1.3"/></svg></div>
  <div class="lbl" style="left:16.2px;top:441.4px">Model Name</div>
  <div class="inp " style="left:16.2px;top:468.1px;width:291.8px;height:43.4px;line-height:41.4px">llama3</div>
  <div class="lbl" style="left:16.2px;top:539px">Max Tokens</div>
  <div class="inp " style="left:16.2px;top:566.1px;width:291.8px;height:43.3px;line-height:41.3px">2000</div>
  <div class="lbl" style="left:16.2px;top:661.8px">Created</div>
  <div class="inp dis2" style="left:16.2px;top:689.1px;width:291.8px;height:42.9px;line-height:40.9px"></div>
  <div class="lbl" style="left:16.2px;top:758.9px">Last Modified</div>
  <div class="inp dis2" style="left:16.2px;top:786.1px;width:291.8px;height:42.9px;line-height:40.9px"></div>
  <div class="hr" style="left:16.2px;top:322.3px;width:291.8px"></div>
  <div class="hr" style="left:16.2px;top:641.6px;width:291.8px"></div>
  <div class="abs" style="left:324.2px;top:0;width:7.8px;height:861px;background:#f3f3f3;border-radius:4px"></div>
  <div class="sbar" style="left:324.2px;top:0px;width:7.8px;height:850.4px"></div>
</div>

</body>
</html>
